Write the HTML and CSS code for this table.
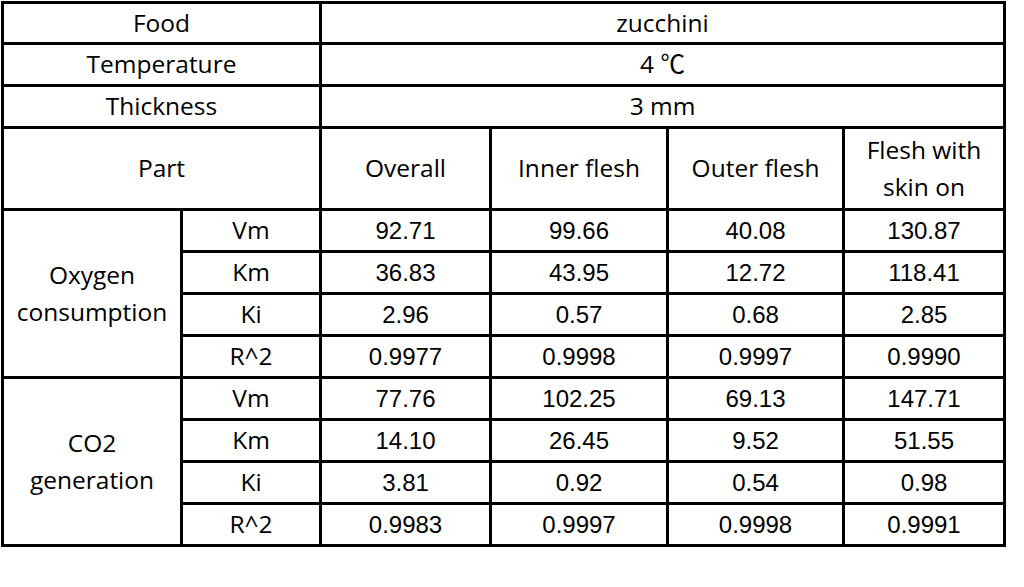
FILE: index.html
```html
<!DOCTYPE html>
<html>
<head>
<meta charset="utf-8">
<link rel="stylesheet" href="styles.css">
</head>
<body>
<div class="grid">
  <div class="c lbl span2">Food</div>
  <div class="c lbl span4">zucchini</div>
  <div class="c lbl span2">Temperature</div>
  <div class="c lbl span4">4 ℃</div>
  <div class="c lbl span2">Thickness</div>
  <div class="c lbl span4">3 mm</div>
  <div class="c lbl span2">Part</div>
  <div class="c lbl">Overall</div>
  <div class="c lbl">Inner flesh</div>
  <div class="c lbl">Outer flesh</div>
  <div class="c lbl">Flesh with<br>skin on</div>

  <div class="c lbl g1">Oxygen<br>consumption</div>
  <div class="c lbl">Vm</div><div class="c num">92.71</div><div class="c num">99.66</div><div class="c num">40.08</div><div class="c num">130.87</div>
  <div class="c lbl">Km</div><div class="c num">36.83</div><div class="c num">43.95</div><div class="c num">12.72</div><div class="c num">118.41</div>
  <div class="c lbl">Ki</div><div class="c num">2.96</div><div class="c num">0.57</div><div class="c num">0.68</div><div class="c num">2.85</div>
  <div class="c lbl">R^2</div><div class="c num">0.9977</div><div class="c num">0.9998</div><div class="c num">0.9997</div><div class="c num">0.9990</div>

  <div class="c lbl g2">CO2<br>generation</div>
  <div class="c lbl">Vm</div><div class="c num">77.76</div><div class="c num">102.25</div><div class="c num">69.13</div><div class="c num">147.71</div>
  <div class="c lbl">Km</div><div class="c num">14.10</div><div class="c num">26.45</div><div class="c num">9.52</div><div class="c num">51.55</div>
  <div class="c lbl">Ki</div><div class="c num">3.81</div><div class="c num">0.92</div><div class="c num">0.54</div><div class="c num">0.98</div>
  <div class="c lbl">R^2</div><div class="c num">0.9983</div><div class="c num">0.9997</div><div class="c num">0.9998</div><div class="c num">0.9991</div>
</div>
</body>
</html>
```
FILE: styles.css
```css
html, body { margin: 0; padding: 0; background: #fff; }
.grid {
  margin: 1px 0 0 1px;
  display: inline-grid;
  background: #000;
  padding: 3px;
  gap: 3px;
  grid-template-columns: 176px 136px 167px 174px 173px 158px;
  grid-template-rows: 38px 39px 39px 79px repeat(8, 39px);
}
.c {
  background: #fff;
  display: flex;
  align-items: center;
  justify-content: center;
  text-align: center;
  color: #000;
}
.lbl { font-family: "Open Sans", "Noto Sans CJK SC", sans-serif; font-size: 24.5px; line-height: 1.48; }
.num { font-family: "Liberation Sans", Arial, sans-serif; font-size: 24px; }
.span2 { grid-column: span 2; }
.span4 { grid-column: span 4; }
.g1 { grid-column: 1; grid-row: 5 / span 4; }
.g2 { grid-column: 1; grid-row: 9 / span 4; }
```
